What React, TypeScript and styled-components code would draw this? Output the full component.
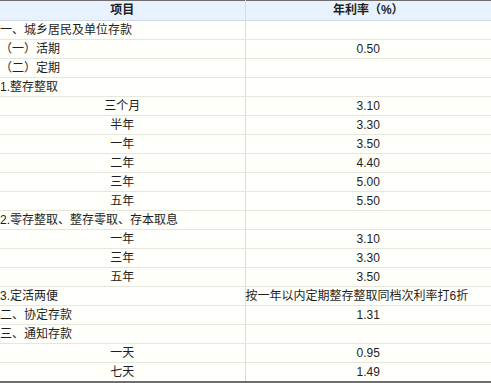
import React from "react";
import styled, { createGlobalStyle } from "styled-components";

const Global = createGlobalStyle`
  html, body { margin: 0; padding: 0; background: #ffffff; }
  body { font-family: "Liberation Sans", "Noto Sans CJK SC", sans-serif; }
`;

const Table = styled.table`
  width: 491px;
  border-collapse: collapse;
  table-layout: fixed;
  font-size: 12px;
  color: #1e1e1e;
  border-top: 1px solid #6e6e6e;
  border-bottom: 2px solid #6e6e6e;
  background: #fffffb;
`;

const HeadCell = styled.th<{ $first?: boolean }>`
  height: 19px;
  padding: 0;
  line-height: 19px;
  font-weight: bold;
  text-align: center;
  background: #e7f2fe;
  border-bottom: 1px solid #cfdbe6;
  border-left: ${(p) => (p.$first ? "none" : "1px solid #d6dde4")};
`;

const Cell = styled.td<{ $align: "left" | "center"; $first?: boolean }>`
  height: 18px;
  padding: 0;
  line-height: 18px;
  text-align: ${(p) => p.$align};
  white-space: nowrap;
  border-bottom: 1px solid #e6e6dd;
  border-left: ${(p) => (p.$first ? "none" : "1px solid #dcdcd6")};
`;

type Row = { name: string; rate: string; sub?: boolean; rateLeft?: boolean };

const rows: Row[] = [
  { name: "一、城乡居民及单位存款", rate: "" },
  { name: "（一）活期", rate: "0.50" },
  { name: "（二）定期", rate: "" },
  { name: "1.整存整取", rate: "" },
  { name: "三个月", rate: "3.10", sub: true },
  { name: "半年", rate: "3.30", sub: true },
  { name: "一年", rate: "3.50", sub: true },
  { name: "二年", rate: "4.40", sub: true },
  { name: "三年", rate: "5.00", sub: true },
  { name: "五年", rate: "5.50", sub: true },
  { name: "2.零存整取、整存零取、存本取息", rate: "" },
  { name: "一年", rate: "3.10", sub: true },
  { name: "三年", rate: "3.30", sub: true },
  { name: "五年", rate: "3.50", sub: true },
  { name: "3.定活两便", rate: "按一年以内定期整存整取同档次利率打6折", rateLeft: true },
  { name: "二、协定存款", rate: "1.31" },
  { name: "三、通知存款", rate: "" },
  { name: "一天", rate: "0.95", sub: true },
  { name: "七天", rate: "1.49", sub: true },
];

export default function App() {
  return (
    <>
      <Global />
      <Table>
        <colgroup>
          <col style={{ width: 245 }} />
          <col />
        </colgroup>
        <thead>
          <tr>
            <HeadCell $first>项目</HeadCell>
            <HeadCell>年利率（%）</HeadCell>
          </tr>
        </thead>
        <tbody>
          {rows.map((r, i) => (
            <tr key={i}>
              <Cell $first $align={r.sub ? "center" : "left"}>
                {r.name}
              </Cell>
              <Cell $align={r.rateLeft ? "left" : "center"}>{r.rate}</Cell>
            </tr>
          ))}
        </tbody>
      </Table>
    </>
  );
}
